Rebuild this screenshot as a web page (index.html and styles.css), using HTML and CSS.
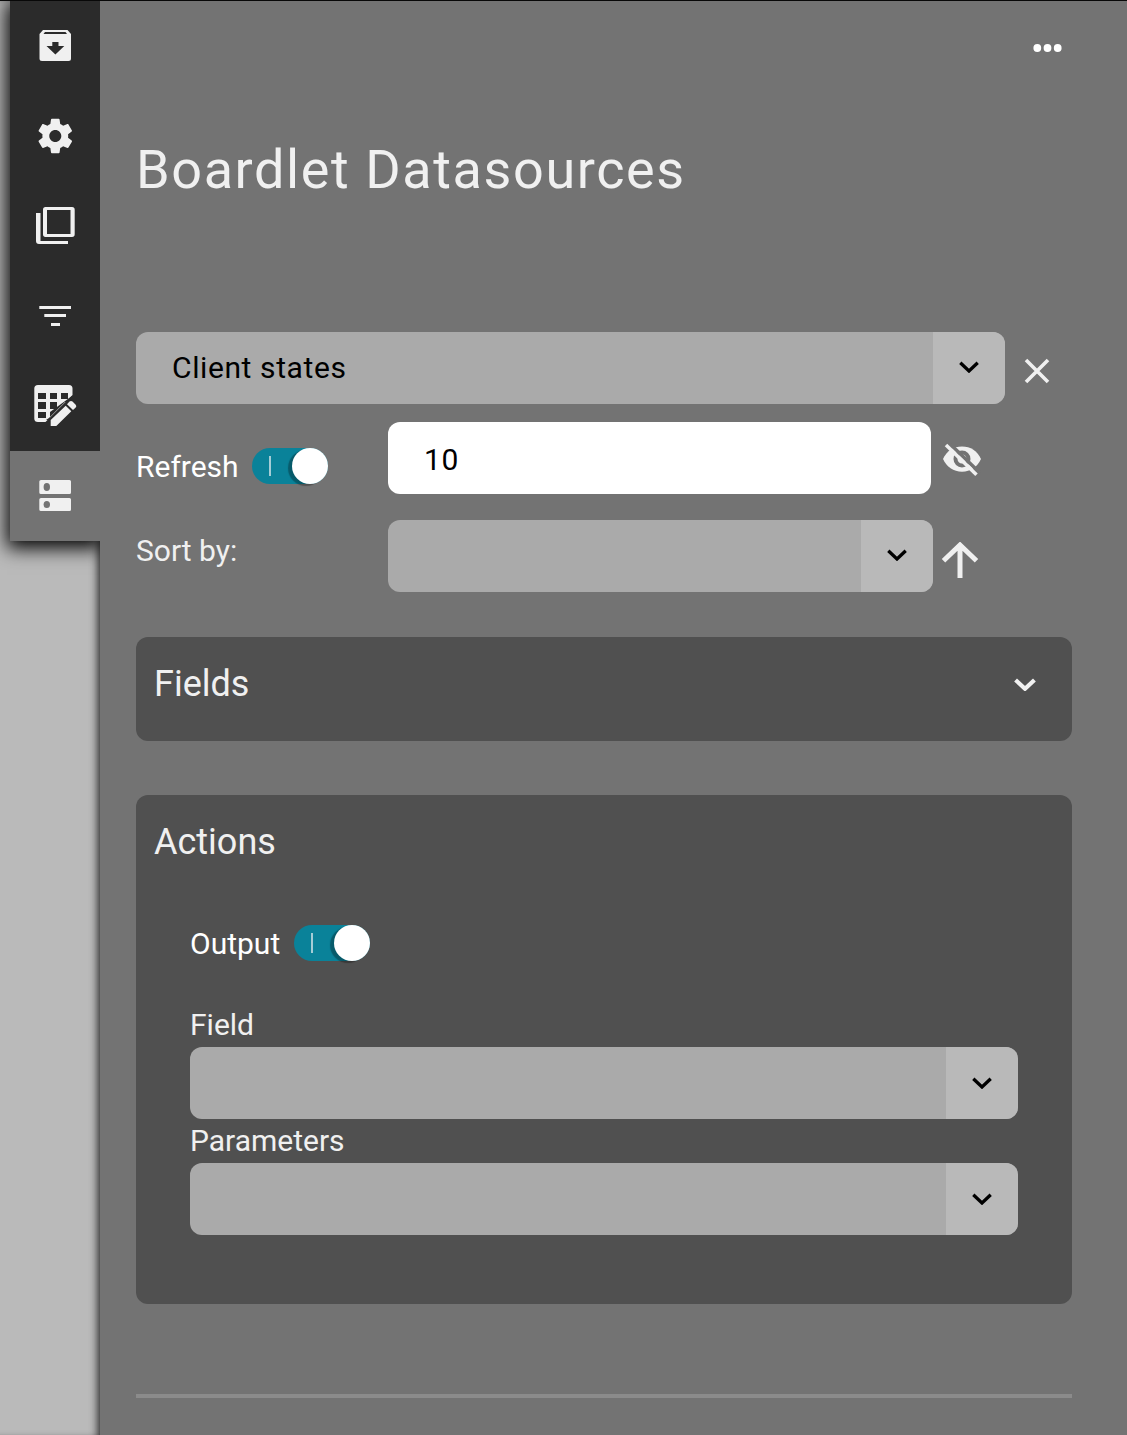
FILE: index.html
```html
<!DOCTYPE html>
<html lang="en">
<head>
<meta charset="utf-8">
<title>Boardlet Datasources</title>
<link rel="stylesheet" href="styles.css">
</head>
<body>
<aside class="rail">
  <nav class="tabs">
    <a class="tab"><svg viewBox="10 1 90 90"><path fill-rule="evenodd" d="M43 30H67.500L71 34V58.500Q71 61 68.500 61H42Q39.500 61 39.500 58.500V34ZM45 31.900L43.500 34.100H67L65.500 31.900ZM52.300 42H58.500V46H64.300L55.400 54.600L46.500 46H52.300Z"/></svg></a>
    <a class="tab"><svg viewBox="10 91 90 90"><path transform="translate(34.650 115.400) scale(1.720)" d="M19.43 12.98c.04-.32.07-.64.07-.98s-.03-.66-.07-.98l2.110-1.650c.19-.15.24-.42.12-.64l-2-3.460c-.12-.22-.39-.3-.61-.22l-2.490 1c-.52-.4-1.080-.73-1.690-.98l-.38-2.650C14.460 2.180 14.250 2 14 2h-4c-.25 0-.46.18-.49.42l-.38 2.650c-.61.25-1.170.59-1.690.98l-2.490-1c-.23-.09-.49 0-.61.22l-2 3.460c-.13.22-.07.49.12.64l2.110 1.650c-.04.32-.07.65-.07.98s.03.66.07.98l-2.110 1.650c-.19.15-.24.42-.12.64l2 3.460c.12.22.39.3.61.22l2.490-1c.52.4 1.080.73 1.690.98l.38 2.650c.03.24.24.42.49.42h4c.25 0 .46-.18.49-.42l.38-2.650c.61-.25 1.170-.59 1.690-.98l2.490 1c.23.09.49 0 .61-.22l2-3.460c.12-.22.07-.49-.12-.64l-2.110-1.650zM12 15.500c-1.930 0-3.500-1.570-3.500-3.500s1.570-3.500 3.500-3.500 3.500 1.570 3.500 3.500-1.570 3.500-3.500 3.500z"/></svg></a>
    <a class="tab"><svg viewBox="10 181 90 90"><path fill-rule="evenodd" d="M45.500 207H72Q74.700 207 74.700 209.700V234.300Q74.700 237 72 237H45.500Q43 237 43 234.300V209.700Q43 207 45.500 207ZM47 210V234H70.500V210ZM36 213H40.500V241H68V244H39Q36 244 36 241Z"/></svg></a>
    <a class="tab"><svg viewBox="10 271 90 90"><path d="M39.300 306H71V309H39.300ZM44.300 314H66V317H44.300ZM51 323H60V326H51Z"/></svg></a>
    <a class="tab"><svg viewBox="10 361 90 90"><path fill-rule="evenodd" d="M38 385H69Q72.500 385 72.500 388.500V395L45.500 422H38Q34.300 422 34.300 418.500V388.500Q34.300 385 38 385ZM38 393V399H46V393ZM50 393V399H57V393ZM61 393V399H68V393ZM38 402V409H46V402ZM50 402V409H57V402ZM38 412V418H46V412Z"/><path class="cut" d="M49 418L65 402H72V396L50 412V420H46Z"/><path fill-rule="evenodd" d="M50.700 420L65.700 405.700L71.300 411.300L56.300 426H50.700ZM67 404.300L69.500 401.600Q71 400.200 72.500 401.600L75.700 404.800Q77 406.200 75.700 407.600L73 410Z"/></svg></a>
    <a class="tab tab-active"><svg viewBox="10 451 90 90"><path d="M41 480H69.500Q71 480 71 481.500V492.500Q71 494 69.500 494H41Q39.300 494 39.300 492.500V481.500Q39.300 480 41 480ZM41 498H69.500Q71 498 71 499.500V509.500Q71 511 69.500 511H41Q39.300 511 39.300 509.500V499.500Q39.300 498 41 498Z"/><g class="hole"><ellipse cx="46.800" cy="487" rx="3.200" ry="3.900"/><ellipse cx="46.800" cy="504.500" rx="3.200" ry="3.500"/></g></svg></a>
  </nav>
</aside>
<main class="panel">
  <header class="menu-row"><svg class="more" viewBox="0 0 30 10"><circle cx="4.300" cy="5" r="3.900"/><circle cx="14.500" cy="5" r="3.900"/><circle cx="24.700" cy="5" r="3.900"/></svg></header>
  <h1 class="title">Boardlet Datasources</h1>
  <div class="source-row">
    <div class="select source-select"><span class="value">Client states</span><span class="drop"><svg class="chevron" viewBox="0 0 20 12"><path d="M1.300 1.800L10 10L18.700 1.800"/></svg></span></div>
    <svg class="remove" viewBox="0 0 26 26"><path d="M2 2L24 24M24 2L2 24"/></svg>
  </div>
  <div class="setting refresh-row">
    <div class="label-cell"><span class="switch-label refresh-label">Refresh</span><span class="switch"><span class="knob"></span></span></div>
    <div class="input">10</div>
    <svg class="eye" viewBox="0 0 38 34"><path class="shape" d="M0 16C3.500 8 10.500 3.500 19 3.500S34.500 8 38 16C34.500 24 27.500 28.700 19 28.700S3.500 24 0 16Z"/><circle class="ring" cx="19" cy="16" r="6.500"/><path class="gap" d="M6 0L37 30"/><path class="slash" d="M3 2L33.500 31.700"/></svg>
  </div>
  <div class="setting sort-row">
    <div class="label-cell sort-label">Sort by:</div>
    <div class="select sort-select"><span class="value"></span><span class="drop"><svg class="chevron" viewBox="0 0 20 12"><path d="M1.300 1.800L10 10L18.700 1.800"/></svg></span></div>
    <svg class="ascending" viewBox="0 0 38 36"><path d="M19 36V4M2.500 18.700L19 3L35.500 18.700"/></svg>
  </div>
  <section class="card fields">
    <h2 class="card-title">Fields</h2>
    <svg class="chevron expand" viewBox="0 0 20 12"><path d="M1.300 1.800L10 10L18.700 1.800"/></svg>
  </section>
  <section class="card actions">
    <h2 class="card-title">Actions</h2>
    <div class="action-body">
      <div class="output"><span class="switch-label output-label">Output</span><span class="switch"><span class="knob"></span></span></div>
      <div class="field-label">Field</div>
      <div class="select"><span class="value"></span><span class="drop drop-low"><svg class="chevron" viewBox="0 0 20 12"><path d="M1.300 1.800L10 10L18.700 1.800"/></svg></span></div>
      <div class="field-label">Parameters</div>
      <div class="select"><span class="value"></span><span class="drop drop-low"><svg class="chevron" viewBox="0 0 20 12"><path d="M1.300 1.800L10 10L18.700 1.800"/></svg></span></div>
    </div>
  </section>
  <hr class="divider">
</main>
</body>
</html>
```
FILE: styles.css
```css
* { box-sizing: border-box; }
body {
  margin: 0;
  height: 1435px;
  border-top: 1px solid #080808;
  display: flex;
  overflow: hidden;
  background: #bababa;
  color: #f0f0f0;
  font: 400 30px "Roboto", sans-serif;
}
svg { display: block; flex: none; fill: #f0f0f0; }
h1, h2 { margin: 0; font-weight: 400; }

.rail { width: 100px; flex: none; padding-left: 10px; position: relative; z-index: 1; clip-path: inset(0 0 0 0); }
.tabs { box-shadow: 0 4px 18px 3px #000; }
.tab { display: block; height: 90px; background: #2b2b2b; }
.tab svg { width: 90px; height: 90px; }
.tab .cut { fill: #2b2b2b; }
.tab-active { background: #737373; }
.tab .hole { fill: #737373; }

.panel {
  flex: 1;
  background: #737373;
  padding: 0 55px 0 36px;
  display: flex;
  flex-direction: column;
}
.rail { box-shadow: inset -7px 0 9px -5px #222; }

.menu-row { height: 137px; display: flex; justify-content: flex-end; padding: 41.5px 9px 0 0; }
.more { width: 30px; height: 10px; fill: #fff; }
.title { font-size: 54px; line-height: 64px; letter-spacing: 1.6px; white-space: nowrap; }

.select { height: 72px; border-radius: 12px; background: #aaa; overflow: hidden; display: flex; color: #000; }
.value { flex: 1; padding-left: 36px; line-height: 72px; letter-spacing: .6px; }
.drop { width: 72px; background: #b9b9b9; display: flex; justify-content: center; padding-top: 29px; }
.drop-low { padding-top: 30px; }
.chevron { width: 20px; height: 12px; fill: none; stroke: #000; stroke-width: 3.3px; }

.source-row { display: flex; margin-top: 130px; }
.source-select { width: 869px; }
.remove { width: 26px; height: 26px; margin: 26px 0 0 18.500px; stroke: #f0f0f0; stroke-width: 3.600px; }

.setting { display: flex; height: 72px; }
.label-cell { width: 252px; display: flex; }
.refresh-row { margin-top: 18px; }
.refresh-row .label-cell { padding-top: 26px; }
.switch-label { color: #fff; line-height: 37px; white-space: nowrap; flex: none; }
.refresh-label { width: 116px; }
.output-label { width: 104px; }
.switch {
  width: 76px;
  height: 36px;
  border-radius: 18px;
  background: linear-gradient(#a5cdd6, #a5cdd6) 17px 8px / 2px 20px no-repeat #0a8299;
  display: flex;
  justify-content: flex-end;
}
.knob { width: 36px; height: 36px; border-radius: 50%; background: #fff; box-shadow: -4px 2px 1px rgba(0, 0, 0, .3); }
.input { width: 543px; border-radius: 12px; background: #fff; color: #000; padding-left: 36px; line-height: 75px; letter-spacing: .6px; }
.eye { width: 38px; height: 34px; margin: 21px 0 0 12px; }
.eye .ring { fill: none; stroke: #737373; stroke-width: 4px; }
.eye .gap { stroke: #737373; stroke-width: 3.500px; }
.eye .slash { stroke: #f0f0f0; stroke-width: 3.500px; }

.sort-row { margin-top: 26px; }
.sort-label { line-height: 61px; }
.sort-select { width: 545px; }
.ascending { width: 38px; height: 36px; margin: 22px 0 0 7.500px; fill: none; stroke: #f0f0f0; stroke-width: 5px; }

.card { background: #505050; border-radius: 12px; }
.card-title { font-size: 36px; line-height: 42px; }
.fields { height: 104px; margin-top: 45px; padding: 26px 36px 0 18px; display: flex; justify-content: space-between; }
.expand { stroke: #f0f0f0; stroke-width: 3.800px; width: 22px; height: 13px; margin-top: 15px; }
.actions { height: 509px; margin-top: 54px; padding: 26px 54px 0 18px; }
.action-body { padding-left: 36px; }
.output { display: flex; margin-top: 62px; height: 36px; }
.field-label { line-height: 44px; }
.output + .field-label { margin-top: 42px; }
.divider { width: 100%; height: 4px; margin: 90px 0 0; border: 0; background: #8b8b8b; }
```
